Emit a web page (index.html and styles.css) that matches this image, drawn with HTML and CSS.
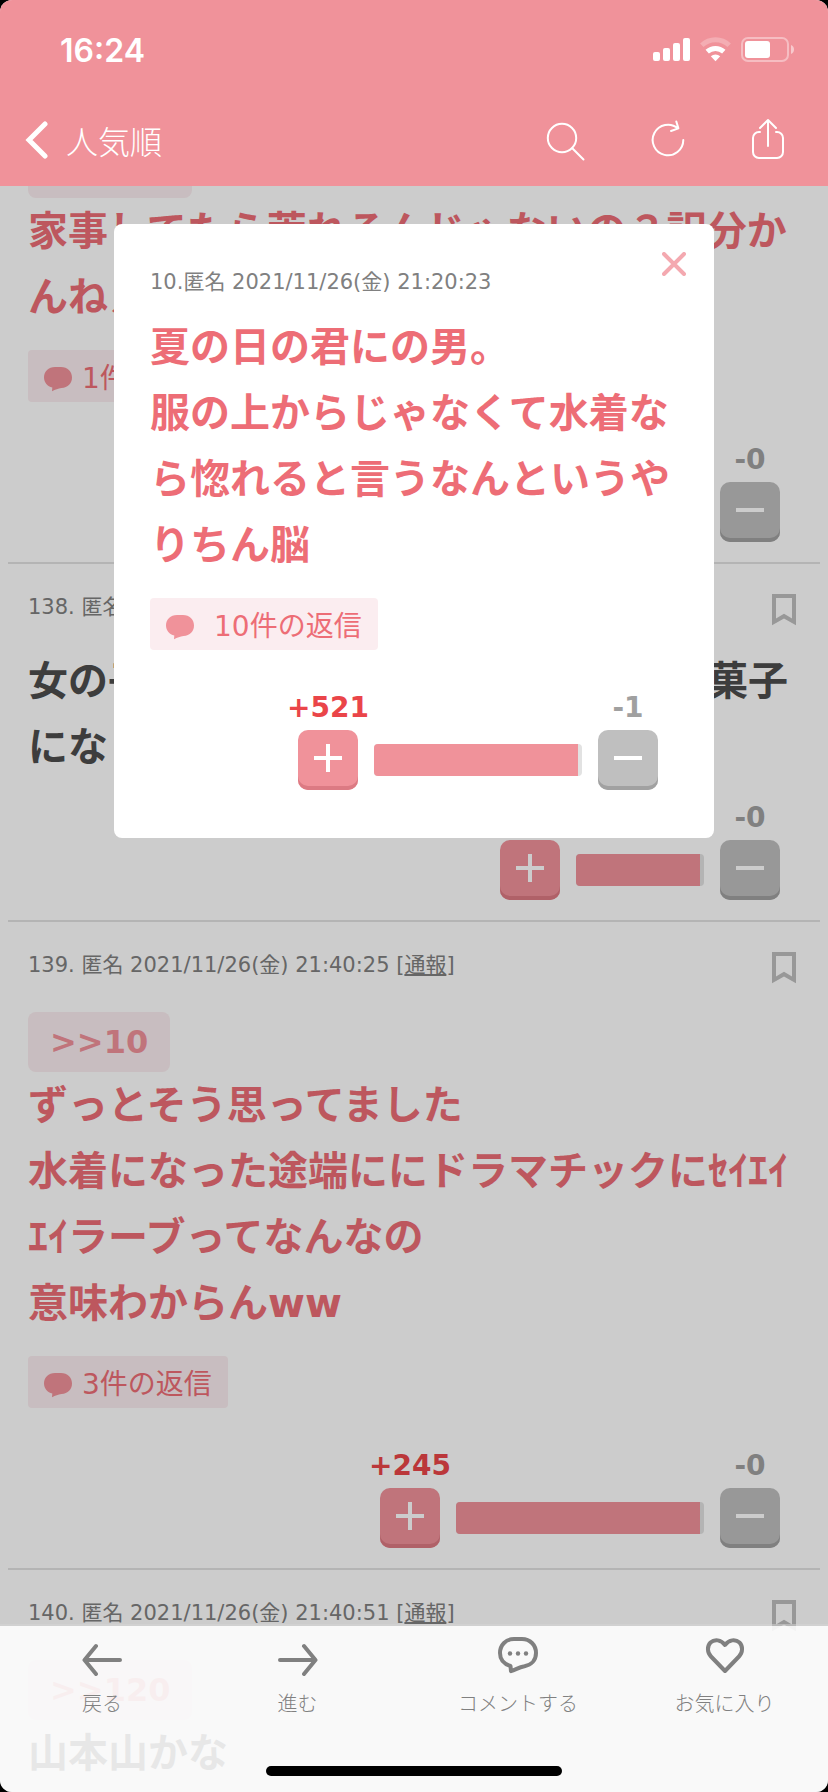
FILE: index.html
```html
<!DOCTYPE html>
<html lang="ja">
<head>
<meta charset="utf-8">
<meta name="viewport" content="width=device-width, initial-scale=1">
<title>人気順</title>
<link rel="stylesheet" href="styles.css">
</head>
<body>
<svg class="defs" aria-hidden="true">
  <symbol id="bubble" viewBox="0 0 28 32"><path d="M11 7h6c6.500 0 11 4.500 11 10.500S24 27.500 17.500 28C14 28.500 11.500 29.500 8 31.300L8.300 27.500C3.500 26.500 0 22.500 0 17.500 0 11.500 4.500 7 11 7z" fill="currentColor"/></symbol>
  <symbol id="bookmark" viewBox="0 0 24 32"><path fill-rule="evenodd" d="M0 0H24V31.300L12 24.500 0 31.300zM4 4V24.500L12 19.700 20 24.500V4z" fill="currentColor"/></symbol>
  <symbol id="plus" viewBox="0 0 28 28"><path d="M0 14h28M14 0v28" stroke="currentColor" stroke-width="4"/></symbol>
  <symbol id="minus" viewBox="0 0 28 28"><path d="M0 14h28" stroke="currentColor" stroke-width="4"/></symbol>
</svg>
<div class="app">
  <header class="header">
    <div class="status">
      <time class="clock">16:24</time>
      <svg class="status-icons" viewBox="0 0 142 28" fill="#fff" aria-hidden="true">
        <rect x="1" y="16" width="7" height="9" rx="2"/>
        <rect x="11" y="12" width="7" height="13" rx="2"/>
        <rect x="21" y="7" width="7" height="18" rx="2"/>
        <rect x="31" y="2" width="7" height="23" rx="2"/>
        <g fill="none" stroke="#fff" stroke-width="5">
          <path d="M49.800 9.200a20 20 0 0 1 27.400 0" opacity=".25"/>
          <path d="M55.200 15.700a12.500 12.500 0 0 1 16.600 0"/>
        </g>
        <path d="M63.500 25.200l-4.700-5a7 7 0 0 1 9.400 0z"/>
        <rect x="90" y="2" width="46" height="23" rx="6" fill="none" stroke="#fff" stroke-width="2" opacity=".4"/>
        <rect x="93" y="5" width="25" height="17" rx="3"/>
        <path d="M139 9c4 1.500 4 7.500 0 9z" opacity=".5"/>
      </svg>
    </div>
    <nav class="nav">
      <button class="back" type="button">
        <svg class="chevron" viewBox="0 0 24 40" fill="none" stroke="#fff" stroke-width="5" stroke-linecap="round" aria-hidden="true"><path d="M21 4 5 20 21 36"/></svg>
        人気順
      </button>
      <div class="actions">
        <button class="action" type="button" aria-label="検索"><svg viewBox="0 0 48 48"><circle cx="18" cy="22" r="14.200"/><path d="M28.300 32.300 39.500 43.500"/></svg></button>
        <button class="action" type="button" aria-label="更新"><svg viewBox="0 0 48 48"><path d="M39.300 24A15.300 15.300 0 1 1 34 12.400M32.300 5.500 34.400 12.400 27 15"/></svg></button>
        <button class="action" type="button" aria-label="共有"><svg viewBox="0 0 48 48"><path d="M16 16h-1a6 6 0 0 0-6 6v14a6 6 0 0 0 6 6h18a6 6 0 0 0 6-6V22a6 6 0 0 0-6-6h-1M24 30V4M16 12 24 4l8 8"/></svg></button>
      </div>
    </nav>
  </header>

  <main class="main">
    <div class="feed">
      <article class="post post-first">
        <div class="anchor-end"></div>
        <p class="text pink">家事してたら荒れるんじゃないの？訳分か<br>んねえ</p>
        <button class="replies" type="button"><svg class="bubble"><use href="#bubble"/></svg>1件の返信</button>
        <div class="votes">
          <div class="vote down"><span class="count">-0</span><button class="vote-button" type="button" aria-label="マイナス"><svg class="sign"><use href="#minus"/></svg></button></div>
        </div>
      </article>

      <article class="post">
        <div class="meta"><span>138. 匿名</span><button class="mark" type="button" aria-label="保存"><svg><use href="#bookmark"/></svg></button></div>
        <p class="text">女の子　　　　　　　　　　　　　　菓子<br>にな</p>
        <div class="votes">
          <div class="vote up"><button class="vote-button" type="button" aria-label="プラス"><svg class="sign"><use href="#plus"/></svg></button></div>
          <div class="bar" style="width:128px"><span class="fill"></span></div>
          <div class="vote down"><span class="count">-0</span><button class="vote-button" type="button" aria-label="マイナス"><svg class="sign"><use href="#minus"/></svg></button></div>
        </div>
      </article>

      <article class="post">
        <div class="meta"><span>139. 匿名 2021/11/26(金) 21:40:25 [<a href="#report">通報</a>]</span><button class="mark" type="button" aria-label="保存"><svg><use href="#bookmark"/></svg></button></div>
        <a class="anchor" href="#c10">&gt;&gt;10</a>
        <p class="text pink">ずっとそう思ってました<br>水着になった途端ににドラマチックにｾｲｴｲｴｲラーブってなんなの<br>意味わからんww</p>
        <button class="replies" type="button"><svg class="bubble"><use href="#bubble"/></svg>3件の返信</button>
        <div class="votes">
          <div class="vote up"><span class="count">+245</span><button class="vote-button" type="button" aria-label="プラス"><svg class="sign"><use href="#plus"/></svg></button></div>
          <div class="bar" style="width:248px"><span class="fill"></span></div>
          <div class="vote down"><span class="count">-0</span><button class="vote-button" type="button" aria-label="マイナス"><svg class="sign"><use href="#minus"/></svg></button></div>
        </div>
      </article>

      <article class="post">
        <div class="meta"><span>140. 匿名 2021/11/26(金) 21:40:51 [<a href="#report">通報</a>]</span><button class="mark" type="button" aria-label="保存"><svg><use href="#bookmark"/></svg></button></div>
        <a class="anchor" href="#c120">&gt;&gt;120</a>
        <p class="text">山本山かな</p>
      </article>
    </div>

    <div class="overlay">
      <section class="dialog" role="dialog" aria-label="コメント10">
        <button class="close" type="button" aria-label="閉じる"><svg viewBox="0 0 24 24"><path d="M2 2 22 22M22 2 2 22"/></svg></button>
        <div class="dialog-meta">10.匿名 2021/11/26(金) 21:20:23</div>
        <p class="text pink">夏の日の君にの男。<br>服の上からじゃなくて水着なら惚れると言うなんというやりちん脳</p>
        <button class="replies replies-wide" type="button"><svg class="bubble"><use href="#bubble"/></svg>10件の返信</button>
        <div class="votes">
          <div class="vote up"><span class="count">+521</span><button class="vote-button" type="button" aria-label="プラス"><svg class="sign"><use href="#plus"/></svg></button></div>
          <div class="bar" style="width:208px"><span class="fill"></span></div>
          <div class="vote down"><span class="count">-1</span><button class="vote-button" type="button" aria-label="マイナス"><svg class="sign"><use href="#minus"/></svg></button></div>
        </div>
      </section>
    </div>
  </main>

  <footer class="toolbar">
    <button class="tool" type="button"><svg viewBox="0 0 40 40"><path d="M38 24H3M14 10 2.500 24 14 38"/></svg>戻る</button>
    <button class="tool" type="button"><svg viewBox="0 0 40 40"><path d="M2 24h35M26 10l11.500 14L26 38"/></svg>進む</button>
    <button class="tool" type="button"><svg viewBox="0 0 40 40"><path d="M16 3h8c8 0 14 6 14 14 0 7-4.500 12-11.500 13.200C21 31 18 33.500 13 35.200L12.500 30C6 28 2 23.500 2 17 2 9 8 3 16 3z"/><g fill="currentColor" stroke="none"><circle cx="12" cy="17.500" r="2.200"/><circle cx="20" cy="17.500" r="2.200"/><circle cx="28" cy="17.500" r="2.200"/></g></svg>コメントする</button>
    <button class="tool" type="button"><svg viewBox="0 0 40 40"><path d="M20 35 6 20.500C2 16.500 2 10 5.500 6.500c4-3.500 10.500-3 14.500 2.500 4-5.500 10.500-6 14.500-2.500C38 10 38 16.500 34 20.500z"/></svg>お気に入り</button>
    <div class="home-bar"></div>
  </footer>
</div>
</body>
</html>
```
FILE: styles.css
```css
* { box-sizing: border-box; }

body {
  margin: 0;
  background: #000;
  font-family: "DejaVu Sans", "Noto Sans CJK JP", sans-serif;
  color: #4d4d4d;
}

button {
  margin: 0;
  padding: 0;
  border: 0;
  background: none;
  color: inherit;
  font: inherit;
}

svg { display: block; }

.defs { display: none; }

.app {
  position: relative;
  display: flex;
  flex-direction: column;
  height: 100vh;
  overflow: hidden;
  border-radius: 12px;
  background: #fff;
}

/* Header */
.header {
  flex: none;
  background: #f0929a;
  color: #fff;
}

.status {
  display: flex;
  align-items: center;
  justify-content: space-between;
  height: 100px;
  padding: 0 34px 0 60px;
}

.clock {
  font: 600 32px "Inter", sans-serif;
}

.status-icons {
  width: 142px;
  height: 28px;
}

.nav {
  display: flex;
  align-items: center;
  justify-content: space-between;
  height: 86px;
  padding: 0 30px 6px 24px;
}

.back {
  display: flex;
  align-items: center;
  gap: 18px;
  font: 300 32px/48px "Noto Sans CJK JP", sans-serif;
}

.chevron {
  width: 24px;
  height: 40px;
}

.actions {
  display: flex;
  gap: 40px;
}

.action {
  display: flex;
  justify-content: center;
  width: 60px;
}

.action svg {
  width: 48px;
  height: 48px;
  fill: none;
  stroke: #fff;
  stroke-width: 2;
  stroke-linecap: round;
  stroke-linejoin: round;
}

/* Feed */
.main {
  position: relative;
  flex: 1;
  min-height: 0;
  overflow: hidden;
}

.post {
  margin: 0 8px;
  padding: 24px 24px 20px 20px;
  border-bottom: 2px solid #e2e2e2;
}

.post-first { padding-top: 0; }

.meta {
  display: flex;
  align-items: flex-end;
  justify-content: space-between;
  height: 38px;
  margin-bottom: 22px;
  color: #808080;
  font-size: 21px;
  line-height: 38px;
}

.meta a { color: inherit; }

.mark {
  color: #bebebe;
}

.mark svg {
  width: 24px;
  height: 32px;
}

.text {
  margin: 0;
  font-size: 40px;
  font-weight: 700;
  line-height: 66px;
}

.pink { color: #ed6d76; }

.anchor,
.anchor-end {
  display: block;
  background: #fbedf0;
}

.anchor {
  width: fit-content;
  margin-top: 28px;
  padding: 0 22px;
  border-radius: 8px;
  color: #f0929a;
  font-size: 32px;
  font-weight: 700;
  line-height: 60px;
  text-decoration: none;
}

.anchor-end {
  width: 164px;
  height: 12px;
  border-radius: 0 0 8px 8px;
}

.replies {
  display: flex;
  align-items: center;
  gap: 10px;
  height: 52px;
  margin: 20px 0;
  padding: 0 16px;
  border-radius: 4px;
  background: #fbedf0;
  color: #ed6d76;
  font-size: 28px;
}

.replies-wide { gap: 20px; }

.bubble {
  width: 28px;
  height: 32px;
  color: #f0929a;
}

/* Votes */
.votes {
  display: flex;
  align-items: flex-end;
  justify-content: flex-end;
  gap: 16px;
  padding: 20px 16px 0 0;
}

.vote {
  display: flex;
  flex-direction: column;
  align-items: center;
  gap: 4px;
  width: 60px;
}

.count {
  font-size: 28px;
  font-weight: 700;
  line-height: 36px;
  white-space: nowrap;
}

.up .count { color: #ea4549; }
.down .count { color: #a0a0a0; }

.vote-button {
  display: flex;
  align-items: center;
  justify-content: center;
  width: 60px;
  height: 60px;
  padding-bottom: 4px;
  border-radius: 10px;
  color: #fff;
}

.up .vote-button {
  background: #f0929a;
  box-shadow: inset 0 -4px #dc7a83;
}

.down .vote-button {
  background: #bfbfbf;
  box-shadow: inset 0 -4px #a1a1a1;
}

.sign {
  width: 28px;
  height: 28px;
}

.bar {
  height: 32px;
  margin-bottom: 14px;
  padding-right: 4px;
  overflow: hidden;
  border-radius: 4px;
  background: #e2e2e2;
}

.fill {
  display: block;
  height: 100%;
  background: #f0929a;
}

/* Dialog */
.overlay {
  position: absolute;
  inset: 0;
  display: flex;
  align-items: flex-start;
  justify-content: center;
  padding: 38px 16px 0;
  background: rgba(0, 0, 0, 0.2);
}

.dialog {
  position: relative;
  width: 100%;
  max-width: 600px;
  padding: 40px 36px 48px;
  border-radius: 8px;
  background: #fff;
}

.dialog-meta {
  margin-bottom: 14px;
  color: #808080;
  font-size: 21px;
  line-height: 36px;
}

.close {
  position: absolute;
  top: 28px;
  right: 28px;
}

.close svg {
  width: 24px;
  height: 24px;
  fill: none;
  stroke: #f4a9b0;
  stroke-width: 4;
  stroke-linecap: round;
}

.dialog .votes { padding-right: 20px; }

/* Toolbar */
.toolbar {
  position: absolute;
  right: 0;
  bottom: 0;
  left: 0;
  display: grid;
  grid-template-columns: 204fr 187fr 254fr 159fr;
  align-items: start;
  height: 168px;
  padding: 10px 24px 0 0;
  border-top: 2px solid rgba(214, 214, 214, 0.5);
  background: rgba(255, 255, 255, 0.88);
  background-clip: padding-box;
}

.tool {
  display: flex;
  flex-direction: column;
  align-items: center;
  gap: 15px;
  color: #808080;
  font: 300 20px/24px "Noto Sans CJK JP", sans-serif;
  white-space: nowrap;
}

.tool svg {
  width: 40px;
  height: 40px;
  fill: none;
  stroke: currentColor;
  stroke-width: 4;
  stroke-linecap: round;
  stroke-linejoin: round;
}

.home-bar {
  position: absolute;
  bottom: 16px;
  left: 50%;
  width: 296px;
  height: 10px;
  margin-left: -148px;
  border-radius: 5px;
  background: #000;
}
```
